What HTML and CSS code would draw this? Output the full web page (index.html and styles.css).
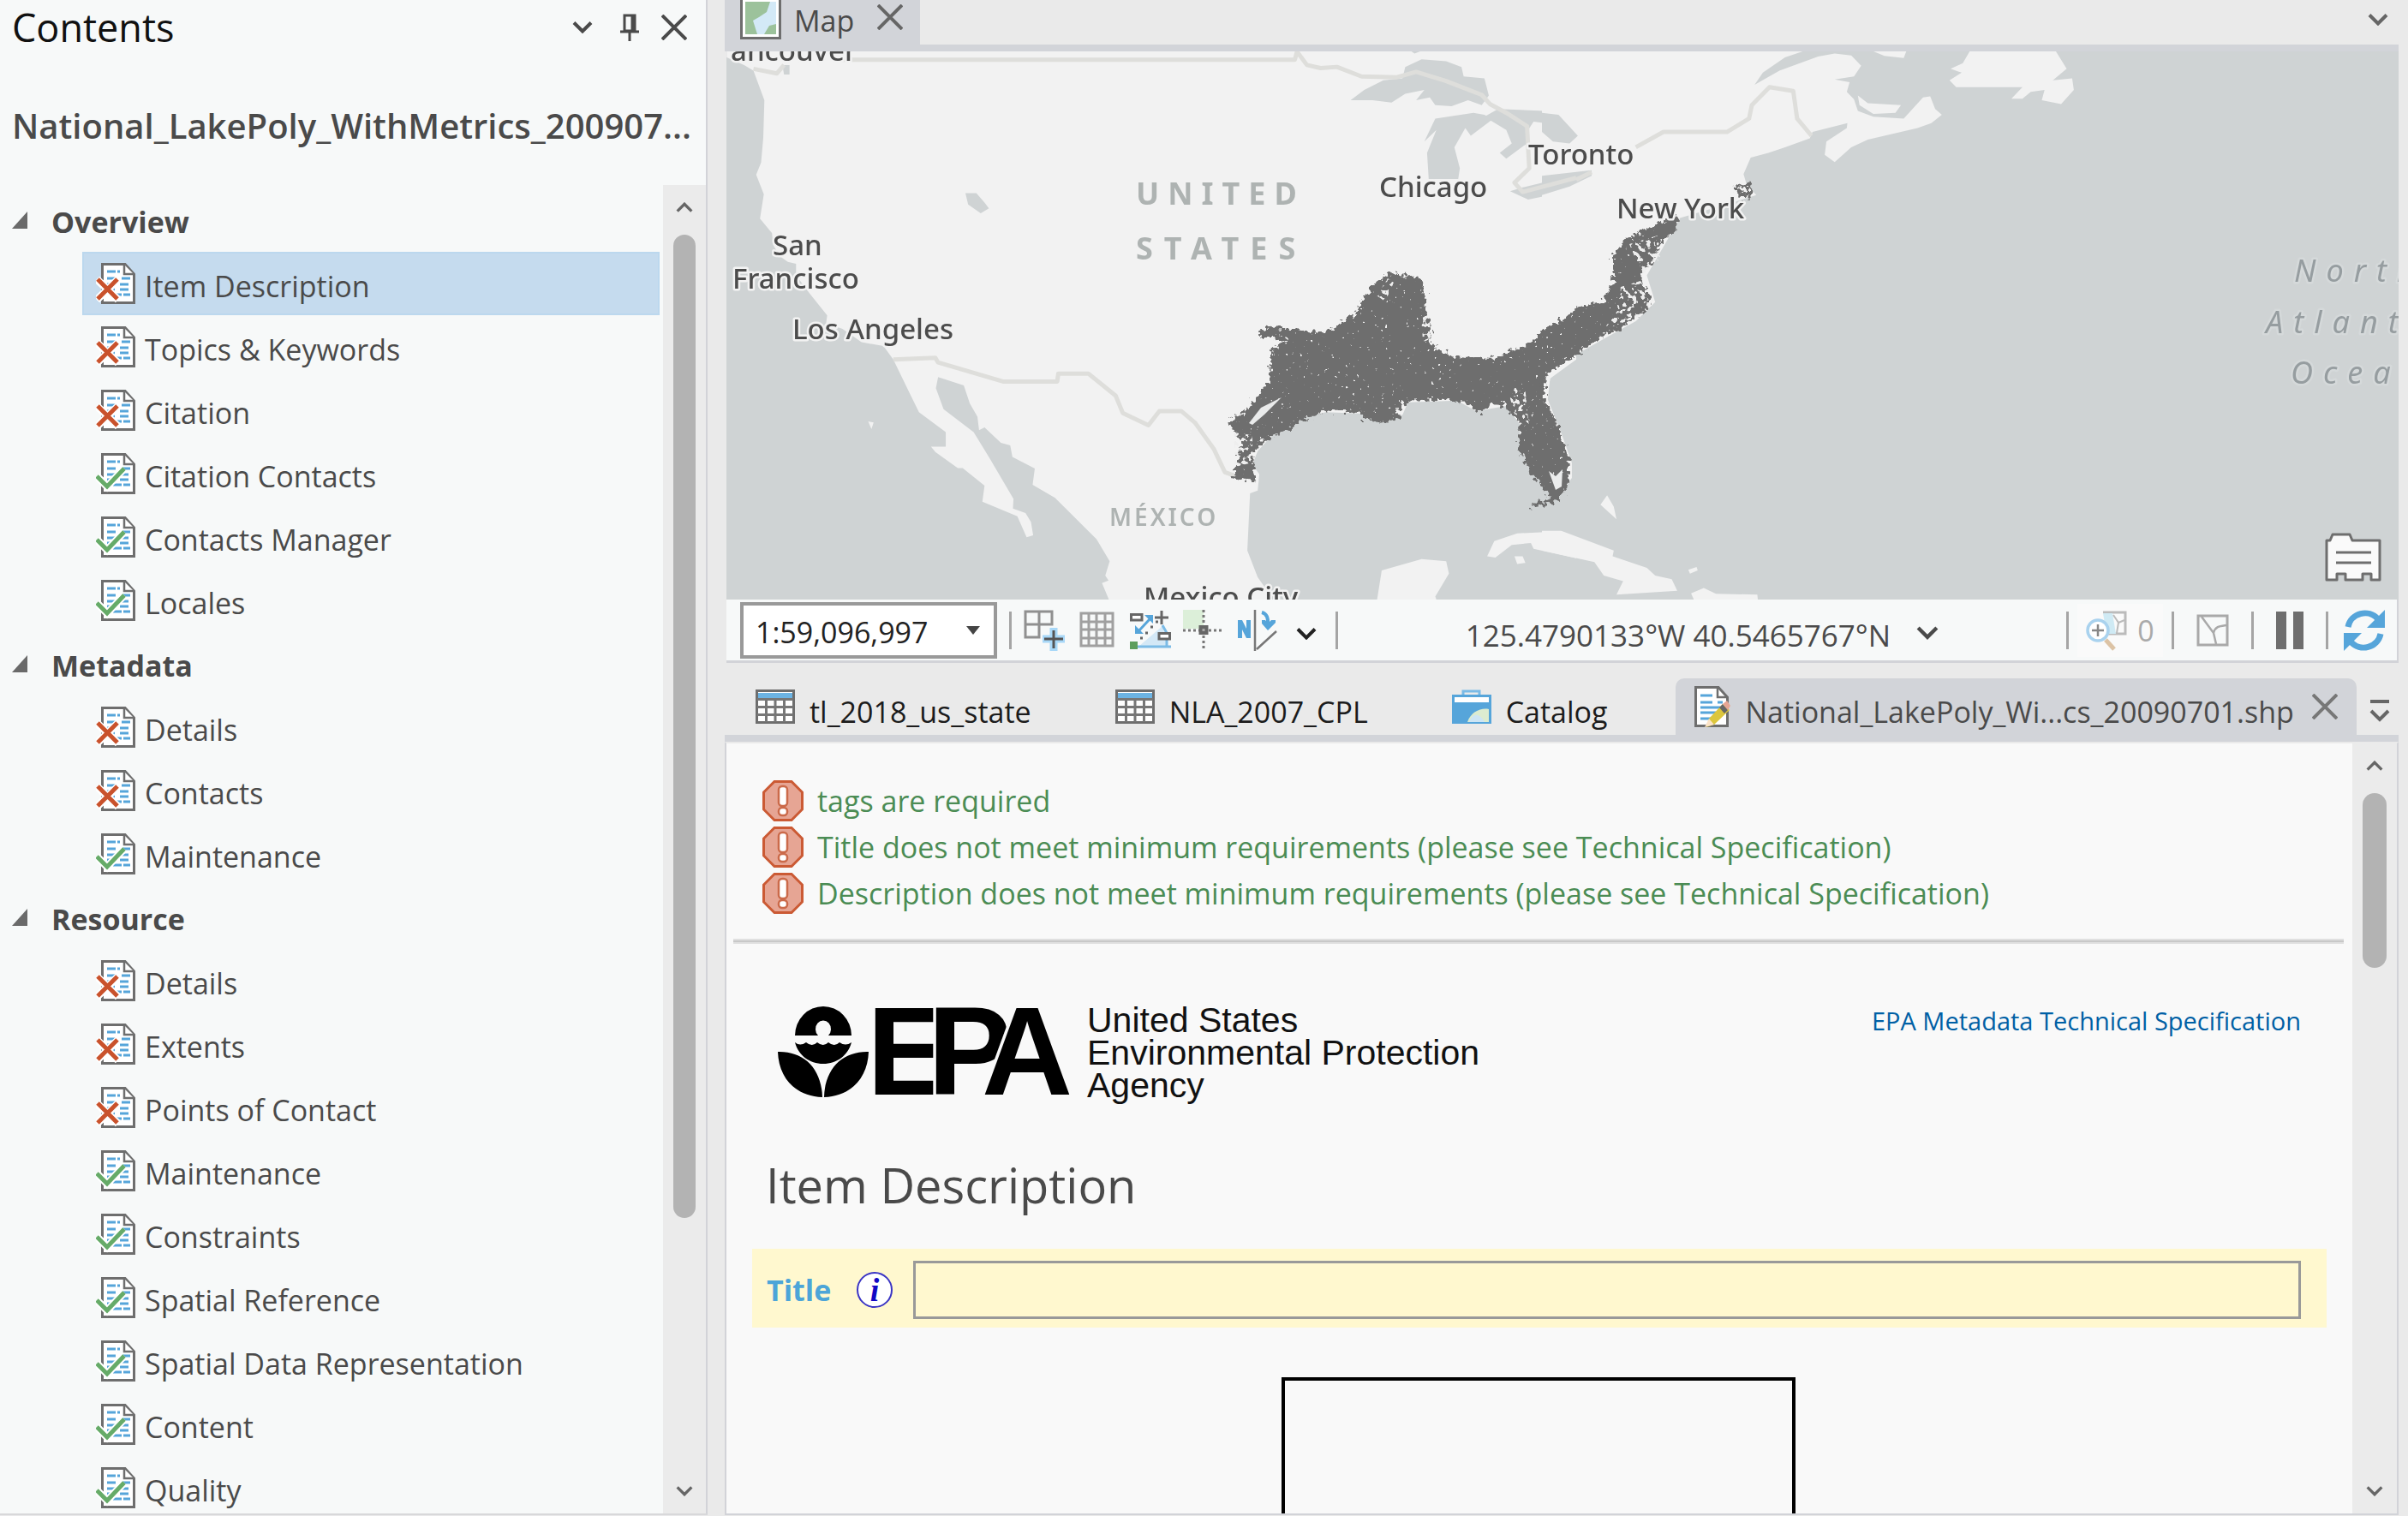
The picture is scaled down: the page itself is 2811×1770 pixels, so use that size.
FILE: index.html
```html
<!DOCTYPE html>
<html lang="en">
<head>
<meta charset="utf-8">
<title>Map - Item Description</title>
<meta name="viewport" content="width=device-width, initial-scale=1">
<link rel="stylesheet" href="styles.css">
</head>
<body>
<svg class="sprite" aria-hidden="true">
  <symbol id="page" viewBox="0 0 46 48">
    <path d="M7.500 1.500H34L44.500 13V46.500H7.500Z" fill="#fff" stroke="#6e6e6e" stroke-width="3"/>
    <path d="M33 2V13H44" fill="#fff" stroke="#6e6e6e" stroke-width="2.500"/>
    <path d="M13 10H28M13 18H24M30 18H40M13 25H22M28 25H40M13 31H22M28 31H40M20 37H40" stroke="#56a5da" stroke-width="3" stroke-dasharray="10 2"/>
  </symbol>
  <symbol id="bad" viewBox="0 0 46 48">
    <use href="#page"/>
    <path d="M1 19L26 43M26 19L1 43" stroke="#fff" stroke-width="9"/>
    <path d="M2 19L25 42M25 19L2 42" stroke="#c9522c" stroke-width="5"/>
  </symbol>
  <symbol id="good" viewBox="0 0 46 48">
    <use href="#page"/>
    <path d="M1 27L13 39L33 18" fill="none" stroke="#fff" stroke-width="9"/>
    <path d="M1 27L13 39L33 18" fill="none" stroke="#66ab68" stroke-width="5"/>
  </symbol>
  <symbol id="x" viewBox="0 0 30 30"><path d="M1 1L29 29M29 1L1 29" stroke="currentColor" stroke-width="4"/></symbol>
  <symbol id="down" viewBox="0 0 24 14"><path d="M2 1.500L12 11.500L22 1.500" fill="none" stroke="currentColor" stroke-width="4"/></symbol>
  <symbol id="up" viewBox="0 0 24 14"><path d="M2 12.500L12 2.500L22 12.500" fill="none" stroke="currentColor" stroke-width="4"/></symbol>
  <symbol id="table" viewBox="0 0 46 40">
    <path d="M1.500 1.500H44.500V38.500H1.500Z" fill="#fff" stroke="#6e6e6e" stroke-width="3"/>
    <path d="M3 4H43V10H3Z" fill="#6cb4e4"/>
    <path d="M2 11.500H44M2 20.500H44M2 29.500H44M12.500 11V38M23 11V38M33.500 11V38" stroke="#777" stroke-width="3"/>
  </symbol>
  <symbol id="alert" viewBox="0 0 48 48">
    <path d="M14 1.500H34L46.500 14V34L34 46.500H14L1.500 34V14Z" fill="#e6a594" stroke="#cb5a34" stroke-width="3"/>
    <rect x="19" y="7" width="10" height="23" rx="4" fill="#fff" stroke="#cb6a4a" stroke-width="2.500"/>
    <rect x="19" y="32" width="10" height="9" rx="4" fill="#fff" stroke="#cb6a4a" stroke-width="2.500"/>
  </symbol>
</svg>

<div class="app">
  <aside class="contents">
    <header class="contents-head">
      <h2>Contents</h2>
      <div class="pane-tools">
        <button type="button" aria-label="Pane options"><svg width="24" height="14"><use href="#down"/></svg></button>
        <button type="button" aria-label="Pin pane"><svg width="28" height="32" viewBox="0 0 28 32"><path d="M11 2H23V20H11ZM6 21H28M17 21V32" fill="none" stroke="currentColor" stroke-width="3"/><path d="M21 2V20" stroke="currentColor" stroke-width="5"/></svg></button>
        <button type="button" aria-label="Close pane"><svg width="30" height="30"><use href="#x"/></svg></button>
      </div>
    </header>
    <h3 class="dataset">National_LakePoly_WithMetrics_200907...</h3>
    <div class="scroll-row">
      <nav class="tree" aria-label="Metadata sections">
        <button type="button" class="group"><svg width="18" height="20" viewBox="0 0 18 20"><path d="M18 0V20H0Z" fill="#6a6a6a"/></svg><span>Overview</span></button>
        <ul>
          <li><a class="active" href="#item"><svg><use href="#bad"/></svg><span>Item Description</span></a></li>
          <li><a href="#topics"><svg><use href="#bad"/></svg><span>Topics &amp; Keywords</span></a></li>
          <li><a href="#citation"><svg><use href="#bad"/></svg><span>Citation</span></a></li>
          <li><a href="#citation-contacts"><svg><use href="#good"/></svg><span>Citation Contacts</span></a></li>
          <li><a href="#manager"><svg><use href="#good"/></svg><span>Contacts Manager</span></a></li>
          <li><a href="#locales"><svg><use href="#good"/></svg><span>Locales</span></a></li>
        </ul>
        <button type="button" class="group"><svg width="18" height="20" viewBox="0 0 18 20"><path d="M18 0V20H0Z" fill="#6a6a6a"/></svg><span>Metadata</span></button>
        <ul>
          <li><a href="#m-details"><svg><use href="#bad"/></svg><span>Details</span></a></li>
          <li><a href="#m-contacts"><svg><use href="#bad"/></svg><span>Contacts</span></a></li>
          <li><a href="#m-maintenance"><svg><use href="#good"/></svg><span>Maintenance</span></a></li>
        </ul>
        <button type="button" class="group"><svg width="18" height="20" viewBox="0 0 18 20"><path d="M18 0V20H0Z" fill="#6a6a6a"/></svg><span>Resource</span></button>
        <ul>
          <li><a href="#r-details"><svg><use href="#bad"/></svg><span>Details</span></a></li>
          <li><a href="#extents"><svg><use href="#bad"/></svg><span>Extents</span></a></li>
          <li><a href="#points"><svg><use href="#bad"/></svg><span>Points of Contact</span></a></li>
          <li><a href="#r-maintenance"><svg><use href="#good"/></svg><span>Maintenance</span></a></li>
          <li><a href="#constraints"><svg><use href="#good"/></svg><span>Constraints</span></a></li>
          <li><a href="#reference"><svg><use href="#good"/></svg><span>Spatial Reference</span></a></li>
          <li><a href="#representation"><svg><use href="#good"/></svg><span>Spatial Data Representation</span></a></li>
          <li><a href="#content"><svg><use href="#good"/></svg><span>Content</span></a></li>
          <li><a href="#quality"><svg><use href="#good"/></svg><span>Quality</span></a></li>
        </ul>
      </nav>
      <div class="scrollbar">
        <button type="button" aria-label="Scroll up"><svg width="20" height="12"><use href="#up"/></svg></button>
        <div class="track"><div class="thumb thumb-tree"></div></div>
        <button type="button" aria-label="Scroll down"><svg width="20" height="12"><use href="#down"/></svg></button>
      </div>
    </div>
  </aside>

  <main class="work">
    <section class="map-pane">
      <div class="map-tabs">
        <div class="map-tab">
          <svg width="48" height="46" viewBox="0 0 48 46"><path d="M1.500 -2H46.500V44.500H1.500Z" fill="#fff" stroke="#6e6e6e" stroke-width="3"/><path d="M6 2H42V40H6Z" fill="#d3e9f7"/><path d="M6 2H35L31 14L22 20L15 24L20 40H6ZM42 40H28L34 30L42 28Z" fill="#9cc29b"/></svg>
          <span>Map</span>
          <button type="button" aria-label="Close map"><svg width="30" height="30"><use href="#x"/></svg></button>
        </div>
        <button type="button" class="more" aria-label="View list"><svg width="24" height="14"><use href="#down"/></svg></button>
      </div>
      <div class="map-view">
        <svg class="map" viewBox="848 60 1952 640" preserveAspectRatio="xMidYMid slice" role="img" aria-label="Basemap of North America with lake polygons">
          <defs>
            <filter id="lakes" x="-5%" y="-5%" width="110%" height="110%">
              <feTurbulence type="fractalNoise" baseFrequency="0.180" numOctaves="2" seed="4" result="n"/>
              <feDisplacementMap in="SourceGraphic" in2="n" scale="14" xChannelSelector="R" yChannelSelector="G" result="edge"/>
              <feTurbulence type="fractalNoise" baseFrequency="0.240" numOctaves="2" seed="9"/>
              <feColorMatrix type="matrix" values="0 0 0 0 0  0 0 0 0 0  0 0 0 0 0  14 0 0 0 -10.200" result="holes"/>
              <feComposite in="edge" in2="holes" operator="out"/>
            </filter>
            <filter id="sparse">
              <feTurbulence type="fractalNoise" baseFrequency="0.180" numOctaves="2" seed="7"/>
              <feColorMatrix type="matrix" values="0 0 0 0 0  0 0 0 0 0  0 0 0 0 0  16 0 0 0 -8.800" result="m"/>
              <feComposite in="SourceGraphic" in2="m" operator="in"/>
            </filter>
          </defs>
          <rect x="0" y="0" width="3600" height="1000" fill="#cfd3d4"/>
          <g transform="translate(840 0) scale(.63776 .44643)" fill="#f2f2f2">
            <path d="M13 100V150L45 170L62 185L82 262L80 360L76 425L67 457L81 508L74 572L96 610L98 640L110 670L125 685L140 690V720L165 768L197 825L195 845L225 860L260 895L300 905L318 940L345 1020L365 1078L414 1130V1168H387L395 1182L436 1224H445L485 1270L481 1312L545 1350L562 1405L574 1400L570 1365L560 1342L537 1330L538 1305L495 1200L465 1130L410 1070L396 1015L400 986L447 1008L458 1055L472 1090L475 1125L485 1118L515 1158L532 1165L536 1195L577 1225L573 1268L614 1302L690 1410L714 1468L706 1505L712 1518L700 1525L722 1600H1010L1000 1540L985 1510L966 1440L971 1290L985 1283L988 1240L975 1215L985 1180L1010 1140L1070 1090L1110 1078L1180 1082L1200 1095L1250 1085L1260 1052L1350 1048L1385 1075L1440 1062L1465 1110V1170L1490 1240L1535 1300L1560 1250V1210L1540 1130L1516 1045L1520 990L1568 940V100Z"/>
            <path d="M1405 1455L1418 1415L1460 1395L1535 1390L1568 1405V1460L1490 1435L1485 1420L1450 1425L1420 1458ZM1200 1600L1212 1492L1285 1462L1330 1468L1335 1500L1310 1560L1320 1600ZM1455 1455H1470L1475 1472L1460 1475ZM272 1102L282 1105L278 1122Z"/>
            <path fill="#cfd3d4" d="M1155 262L1180 235L1215 210L1250 205L1255 175L1285 155L1330 160L1358 175L1362 200L1400 205L1408 250L1395 275L1370 262L1340 278L1310 275L1300 255L1275 262L1290 235L1255 245L1230 268L1195 262ZM1290 370L1310 310L1380 295L1400 300L1415 312L1375 355L1365 335L1345 385L1355 440L1352 468H1298L1295 400L1312 340ZM1425 285L1510 290L1540 300L1568 350V370L1530 365L1515 345L1525 325L1490 318L1480 340L1478 375L1440 415L1428 400L1450 375L1440 340L1400 305ZM1447 500L1470 490L1500 480L1568 455V485L1520 510L1480 522ZM450 505H470L485 530L493 545L478 558L455 535ZM1265 133H1285L1272 140ZM115 170H128V195H118Z"/>
          </g>
          <g transform="translate(1800 0) scale(.64475 .44643)" fill="#f2f2f2">
            <path d="M0 100V133H475L440 150L400 190L385 222L430 185L500 148L530 140L560 145L578 172L565 200L530 208L557 215L552 240L565 260L572 290L600 305L655 310L690 255L703 252L712 285L724 300L705 322L680 335L590 365L560 385L530 424L512 405L515 370L552 335L553 322L490 345L485 362L440 385L410 400L378 412L365 455L370 480L388 510L355 525L250 570L222 640L190 720L205 790L170 840L120 880L40 945L15 990L8 1045L0 1030Z"/>
            <path d="M572 250L590 270L650 275L640 295L600 298L575 275ZM775 133H930L950 180L925 210L960 205L963 235L940 272L905 262L910 235L885 240L870 258H850L870 228H750L738 210L760 190L740 180L762 165ZM598 133H660L655 152L620 146ZM0 1388H35L130 1440L128 1455L190 1485L205 1505L235 1515L245 1545L135 1555L147 1520L112 1505L95 1470L0 1440ZM118 1295L130 1325L135 1358L106 1320ZM265 1490L280 1483L282 1492L268 1500ZM270 1552L293 1538L315 1553L390 1555L393 1600H285Z"/>
            <path fill="#cfd3d4" d="M0 295L30 300L65 355L50 375L20 370L0 345ZM0 460L90 445V460L50 488L0 510Z"/>
          </g>
          <g fill="none" stroke="#dededb" stroke-width="5" stroke-linejoin="round">
            <path vector-effect="non-scaling-stroke" transform="translate(840 0) scale(.63776 .44643)" d="M215 156H1053L1057 135L1075 170L1100 178L1130 175L1175 200L1240 202L1275 188L1330 212L1395 248L1410 272L1440 295L1478 330L1482 440L1455 478L1470 502L1568 465M318 940L395 936L400 948L520 998H618L620 977H675L725 1035L738 1080L785 1112L805 1075H845L870 1105L905 1175L925 1235L945 1245M62 180L105 192L118 170"/>
            <path vector-effect="non-scaling-stroke" transform="translate(1800 0) scale(.64475 .44643)" d="M62 470L90 450M170 385L220 345H335L375 310L380 275L412 228L455 238L462 310L488 355"/>
          </g>
          <g filter="url(#lakes)" fill="#6e6e6e">
            <path transform="translate(837 -1) scale(.63776 .44643)" d="M1230 715L1255 722L1288 728L1298 770L1295 820L1305 850L1308 905L1340 930L1385 942L1430 935L1480 905L1520 875L1568 830V940L1530 960L1516 1000V1050L1545 1135L1560 1210L1556 1280L1540 1308L1520 1295L1490 1240L1468 1175V1110L1440 1062L1420 1060L1395 1082L1370 1055L1330 1048L1262 1052L1245 1075L1250 1100L1215 1108L1190 1102L1175 1082L1120 1078L1080 1095L1040 1130L1000 1155L980 1190L985 1260L945 1250L950 1220L960 1160L935 1105L965 1080L1010 1000L1015 920L1045 890L1020 885H995L990 872L1010 855L1060 865L1115 870L1175 815L1180 785L1200 750Z"/>
            <path transform="translate(1796 -1) scale(.64475 .44643)" d="M0 870L50 835L65 810L118 790L135 740V665L160 625L250 565L252 600L220 640L205 690L185 720L205 800L170 840L120 880L60 935L15 985L8 1050L0 1000Z"/>
            <path d="M1787 590L1805 588L1819 580M2026 218L2041 216L2042 228L2030 227M2027 216L2032 228" fill="none" stroke="#6e6e6e" stroke-width="5"/>
          </g>
          <g filter="url(#sparse)" fill="#eee">
            <path d="M1892 335L1915 328L1930 352L1912 370L1872 385L1887 362ZM1902 285L1935 275L1938 302L1918 322ZM1440 505L1462 508L1462 540L1442 545ZM1620 325L1627 330L1617 352L1607 345ZM1659 368L1669 370L1671 402L1661 398ZM1760 455L1780 450L1785 500L1770 490Z"/>
          </g>
          <path d="M1458 494L1472 476L1496 464L1476 484L1462 496Z" fill="#eaebeb"/>
          <path d="M1808 550L1816 556L1824 548L1823 568L1816 572Z" fill="#eceded"/>
          <g class="place">
            <text x="853" y="71">ancouver</text>
            <text x="902" y="298">San</text>
            <text x="855" y="337">Francisco</text>
            <text x="925" y="396">Los Angeles</text>
            <text x="1610" y="230">Chicago</text>
            <text x="1784" y="192">Toronto</text>
            <text x="1887" y="255">New York</text>
            <text x="1335" y="709">Mexico City</text>
          </g>
          <g class="country">
            <text x="1326" y="239">UNITED</text>
            <text class="states" x="1326" y="303">STATES</text>
            <text class="mexico" x="1295" y="614">MÉXICO</text>
          </g>
          <g class="ocean">
            <text x="2678" y="329">North</text>
            <text x="2645" y="389">Atlantic</text>
            <text x="2674" y="448">Ocean</text>
          </g>
        </svg>
        <button type="button" class="legend" aria-label="Map notebook"><svg width="66" height="58" viewBox="0 0 66 58"><path d="M2 55V9H6L9 2H29L32 9H64V55H54V48H44V55H24V48H14V55Z" fill="#fafafa" stroke="#6e6e6e" stroke-width="3" stroke-linejoin="round"/><path d="M13 23H54M13 35H54" stroke="#6e6e6e" stroke-width="3"/></svg></button>
      </div>
      <div class="toolbar">
        <div class="scale">
          <select aria-label="Map scale"><option>1:59,096,997</option></select>
          <svg width="16" height="10" viewBox="0 0 16 10"><path d="M0 0H16L8 10Z" fill="#444"/></svg>
        </div>
        <i class="sep"></i>
        <button type="button" aria-label="Add grid"><svg width="48" height="48" viewBox="0 0 48 48"><path d="M2 2H33V17H2ZM2 17V32H18V2" fill="none" stroke="#909090" stroke-width="3"/><path d="M35 21V48M22 34H48" stroke="#a8d8f8" stroke-width="9"/><path d="M35 24V45M24 34H46" stroke="#555" stroke-width="3"/></svg></button>
        <button type="button" aria-label="Grid"><svg width="48" height="48" viewBox="0 0 48 48"><path d="M5 4H42V42H5ZM5 14H42M5 23H42M5 33H42M14 4V42M23 4V42M33 4V42" fill="none" stroke="#a0a0a0" stroke-width="3"/></svg></button>
        <button type="button" aria-label="Snapping"><svg width="48" height="48" viewBox="0 0 48 48"><path d="M10 43L38 19L44 44Z" fill="#d3e8f6"/><path d="M8 43H48M38 18L43 27M43 34V43" stroke="#7bbbe6" stroke-width="3"/><path d="M10 25L23 11" stroke="#56a5da" stroke-width="3"/><path d="M17 6H27V16ZM6 18V28H16Z" fill="#56a5da"/><path d="M1.500 5.500H14V12H1.500ZM34 27.500H46.500V34H34Z" fill="#fff" stroke="#666" stroke-width="3"/><path d="M37 1V17M29 9H45M30 14H33M24 20H27M18 27H21M12 33H15" stroke="#666" stroke-width="3"/><path d="M0 37H9V46H0Z" fill="#5c9e5c"/></svg></button>
        <button type="button" aria-label="Dynamic constraints"><svg width="48" height="48" viewBox="0 0 48 48"><path d="M0 0H24V22H0Z" fill="#dcefd9"/><path d="M24 0V48M0 24H48" stroke="#777" stroke-width="3" stroke-dasharray="3 3"/><path d="M20.500 20H27.500V27H20.500Z" fill="#aaa" stroke="#666" stroke-width="4"/></svg></button>
        <button type="button" aria-label="North up"><svg width="48" height="48" viewBox="0 0 48 48"><path d="M2 33V12H7L12 22V12H17V33H12L7 23V33Z" fill="#56a5da"/><path d="M22 0V48M24 46L47 25" stroke="#777" stroke-width="2.500"/><path d="M30 3Q38 5 37 17" fill="none" stroke="#56a5da" stroke-width="4"/><path d="M30 12H34L37 16L41 12H46V15L37 24L30 16Z" fill="#56a5da"/></svg></button>
        <button type="button" class="tool-more" aria-label="More tools"><svg width="24" height="14"><use href="#down"/></svg></button>
        <i class="sep"></i>
        <div class="coords"><span>125.4790133°W 40.5465767°N</span><button type="button" aria-label="Coordinate format"><svg width="26" height="16"><use href="#down"/></svg></button></div>
        <div class="status">
          <i class="sep"></i>
          <button type="button" class="count" aria-label="Selected features"><svg width="48" height="48" viewBox="0 0 48 48"><path d="M20 3H46V28H24" fill="#fafafa" stroke="#bbb" stroke-width="3"/><path d="M20 4H31L35 28H24Z" fill="#cfeaf4"/><path d="M32 6L38 15L36 27M38 15L45 12" fill="none" stroke="#bbb" stroke-width="2"/><circle cx="14" cy="24" r="12" fill="#fff" stroke="#a9d2ee" stroke-width="3.500"/><path d="M14 17V31M7 24H21" stroke="#888" stroke-width="2.500"/><path d="M23 35L33 46" stroke="#dcc3a5" stroke-width="5"/></svg><span>0</span></button>
          <i class="sep"></i>
          <button type="button" class="clip" aria-label="Map extent"><svg width="38" height="38" viewBox="0 0 38 38"><path d="M2 2H36V36H2Z" fill="none" stroke="#a9a9a9" stroke-width="3"/><path d="M6 3L20 22L23 35M20 22C22 14 28 14 35 13" fill="none" stroke="#a9a9a9" stroke-width="2.500"/></svg></button>
          <i class="sep"></i>
          <button type="button" aria-label="Pause drawing"><svg width="48" height="48" viewBox="0 0 48 48"><path d="M8 2H20V46H8ZM28 2H40V46H28Z" fill="#6e6e6e"/></svg></button>
          <i class="sep"></i>
          <button type="button" aria-label="Refresh"><svg width="48" height="48" viewBox="0 0 48 48"><path d="M5 20C8 4 29 -2 40 11M43 28C40 44 19 50 8 37" fill="none" stroke="#56a5da" stroke-width="7"/><path d="M48 0V21H27ZM0 48V27H21Z" fill="#56a5da"/></svg></button>
        </div>
      </div>
    </section>

    <section class="doc-pane">
      <div class="doc-tabs">
        <button type="button" class="tab"><svg width="46" height="40"><use href="#table"/></svg><span>tl_2018_us_state</span></button>
        <button type="button" class="tab"><svg width="46" height="40"><use href="#table"/></svg><span>NLA_2007_CPL</span></button>
        <button type="button" class="tab"><svg width="46" height="40" viewBox="0 0 46 40"><path d="M13 6V2H32V6" fill="none" stroke="#7bbbe6" stroke-width="3"/><path d="M0 6H46V40H0Z" fill="#56a5da"/><path d="M3 9H43V15H3Z" fill="#fff"/><path d="M18 38C22 26 34 21 43 23V38Z" fill="#dcecd0"/><path d="M20 38C24 27 32 27 38 38Z" fill="#cde5f4"/></svg><span>Catalog</span></button>
        <div class="tab tab-open"><svg width="42" height="48" viewBox="0 0 42 48"><path d="M1.500 1.500H28L38.500 13V46.500H1.500Z" fill="#fff" stroke="#6e6e6e" stroke-width="3"/><path d="M27 2V13H38" fill="none" stroke="#6e6e6e" stroke-width="2.500"/><path d="M7 11H21M7 19H21M27 19H33M7 25H30M7 31H25M7 38H20" stroke="#56a5da" stroke-width="3"/><path d="M17 38L33 21L41 28L23 45L14 48Z" fill="#dcc63c"/><path d="M17 38L23 45L12 48Z" fill="#fbe3c8"/><path d="M29 25L33 21L39 28L35 32Z" fill="#666"/><path d="M33 21L38 17L42 23L39 28Z" fill="#e6a594"/></svg><span>National_LakePoly_Wi...cs_20090701.shp</span><button type="button" aria-label="Close tab"><svg width="30" height="30"><use href="#x"/></svg></button></div>
        <button type="button" class="more-docs" aria-label="Open views"><svg width="24" height="28" viewBox="0 0 24 28"><path d="M1 3H23M2 14L12 24L22 14" fill="none" stroke="currentColor" stroke-width="4"/></svg></button>
      </div>
      <div class="scroll-row doc">
        <div class="page">
          <ul class="alerts">
            <li><svg width="48" height="48"><use href="#alert"/></svg><span>tags are required</span></li>
            <li><svg width="48" height="48"><use href="#alert"/></svg><span>Title does not meet minimum requirements (please see Technical Specification)</span></li>
            <li><svg width="48" height="48"><use href="#alert"/></svg><span>Description does not meet minimum requirements (please see Technical Specification)</span></li>
          </ul>
          <hr>
          <div class="brand">
            <svg width="820" height="124" viewBox="908 1174 820 124" role="img" aria-label="EPA United States Environmental Protection Agency">
              <path d="M928 1211A33 34 0 0 1 994 1211H967A9 10 0 1 0 955 1211Z"/>
              <path d="M928 1219Q934 1224 941 1219Q948 1225 954 1219Q961 1225 967 1219Q974 1225 980 1219Q987 1224 994 1219C990 1234 977 1244 961 1244C945 1244 932 1234 928 1219Z"/>
              <path d="M908 1230C937 1229 959 1248 960 1283C929 1282 909 1261 908 1230ZM1014 1230C985 1229 963 1248 962 1283C993 1282 1013 1261 1014 1230Z"/>
              <text class="epa" y="1280"><tspan x="1012">E</tspan><tspan x="1083">P</tspan><tspan x="1146">A</tspan></text>
              <g class="agency"><text x="1269" y="1207">United States</text><text x="1269" y="1245">Environmental Protection</text><text x="1269" y="1283">Agency</text></g>
            </svg>
            <a href="#spec">EPA Metadata Technical Specification</a>
          </div>
          <h1>Item Description</h1>
          <div class="field">
            <label for="title">Title</label>
            <svg width="44" height="44" viewBox="0 0 44 44" role="img" aria-label="Information"><circle cx="22" cy="22" r="20" fill="#fff" stroke="#3b35c4" stroke-width="2"/><text class="info" x="22" y="35" text-anchor="middle">i</text></svg>
            <input id="title" type="text">
          </div>
          <div class="thumbnail"></div>
        </div>
        <div class="scrollbar">
          <button type="button" aria-label="Scroll up"><svg width="20" height="12"><use href="#up"/></svg></button>
          <div class="track"><div class="thumb thumb-doc"></div></div>
          <button type="button" aria-label="Scroll down"><svg width="20" height="12"><use href="#down"/></svg></button>
        </div>
      </div>
    </section>
  </main>
</div>
</body>
</html>
```
FILE: styles.css
```css
* { box-sizing: border-box; }

body {
  margin: 0;
  background: #eaeaea;
  color: #4a4a4a;
  font: 34px/48px "Open Sans", "Noto Sans", sans-serif;
}

button {
  padding: 0;
  border: 0;
  background: none;
  color: inherit;
  font: inherit;
  display: flex;
  align-items: center;
  justify-content: center;
  flex: none;
}

svg { display: block; flex: none; }
ul { list-style: none; margin: 0; padding: 0; }
h1, h2, h3 { margin: 0; font-weight: 400; }
.sprite { position: absolute; width: 0; height: 0; }

.app { display: flex; gap: 20px; height: 100vh; padding: 0 11px 1px 0; overflow: hidden; }

/* Contents pane */
.contents {
  flex: 0 0 826px;
  display: flex;
  flex-direction: column;
  background: #f7f9f9;
  border-right: 2px solid #d2d3d8;
  border-bottom: 2px solid #d8d8da;
}
.contents-head { display: flex; align-items: center; justify-content: space-between; height: 64px; padding: 0 22px 0 14px; }
.contents-head h2 { font-size: 45px; line-height: 64px; color: #111; }
.pane-tools { display: flex; align-items: center; gap: 26px; }
.dataset { margin: 48px 14px 34px; font-size: 40px; line-height: 70px; font-weight: 600; white-space: nowrap; }

.scroll-row { display: flex; flex: 1; min-height: 0; }
.tree { flex: 1; padding: 4px 4px 0 0; overflow: hidden; }
.group { width: 100%; height: 74px; padding-left: 14px; gap: 28px; justify-content: flex-start; font-weight: 700; }
.group span { padding-top: 4px; }
.tree ul { padding-left: 96px; }
.tree a { display: flex; align-items: center; gap: 11px; height: 74px; padding-left: 16px; color: inherit; text-decoration: none; }
.tree a svg { width: 46px; height: 48px; }
.tree a span { padding-top: 5px; }
.tree a.active { background: #c5dbee; border: 2px solid #bcd8ee; padding-left: 14px; }

.scrollbar { flex: 0 0 50px; display: flex; flex-direction: column; background: #ebebeb; color: #666; }
.scrollbar button { height: 52px; }
.scrollbar .track { flex: 1; padding: 6px 12px; }
.thumb { border-radius: 14px; background: #b3b3b3; }
.thumb-tree { height: 80%; }
.thumb-doc { height: 26%; }

/* Map pane */
.work { flex: 1; min-width: 0; display: flex; flex-direction: column; }
.map-pane { flex: 774; min-height: 0; display: flex; flex-direction: column; }
.map-tabs { display: flex; justify-content: space-between; height: 60px; border-bottom: 8px solid #d2d4d9; }
.map-tab { display: flex; gap: 15px; padding: 0 20px 0 18px; background: #d2d4d9; }
.map-tab span { margin-right: 12px; }
.map-tab button { height: 40px; color: #666; }
.more { height: 46px; margin-right: 12px; color: #666; }
.map-view { position: relative; flex: 1; min-height: 0; margin-left: 2px; }
.map { width: 100%; height: 100%; }
.legend { position: absolute; right: 20px; bottom: 20px; }

.map text { font-family: "Noto Sans", "Open Sans", sans-serif; paint-order: stroke; stroke: #f2f2f2; stroke-width: 5px; stroke-linejoin: round; }
.place { font-size: 33px; font-weight: 500; fill: #4c4c4c; }
.map .ocean text { stroke: #d5d9da; }
.country { font-size: 36px; font-weight: 700; fill: #aeb3b2; letter-spacing: 10px; }
.country .states { letter-spacing: 13px; }
.country .mexico { font-size: 28px; font-weight: 600; letter-spacing: 3px; }
.ocean { font-size: 36px; font-style: italic; fill: #969da0; letter-spacing: 12px; }

.toolbar {
  display: flex;
  align-items: center;
  gap: 14px;
  height: 74px;
  margin-left: 2px;
  padding: 0 14px 0 16px;
  background: #f7f9f9;
  border: 2px solid #d2d3d8;
  border-width: 0 2px 3px 0;
}
.scale { display: flex; align-items: center; width: 300px; height: 66px; padding-right: 16px; border: 4px solid #999; background: #fff; }
.scale select { flex: 1; height: 58px; padding: 5px 0 0 14px; border: 0; background: none; color: #222; font: inherit; appearance: none; }
.sep { flex: none; width: 3px; height: 44px; background: #a5a5a5; }
.tool-more { width: 40px; padding-top: 8px; color: #222; }
.coords { display: flex; align-items: center; gap: 30px; margin: 0 auto; padding-top: 12px; font-size: 35px; white-space: nowrap; }
.coords button { padding-bottom: 6px; }
.status { display: flex; align-items: center; gap: 18px; }
.count { width: 100px; height: 62px; gap: 12px; margin: 0 -8px; background: #fafafa; color: #aaa; }
.clip { width: 54px; }

/* Document pane */
.doc-pane { flex: 995; min-height: 0; display: flex; flex-direction: column; }
.doc-tabs { display: flex; align-items: flex-end; height: 92px; padding-left: 18px; border-bottom: 8px solid #d2d4d9; }
.tab { display: flex; align-items: center; gap: 17px; height: 66px; padding: 0 80px 0 18px; color: #1c1c1c; white-space: nowrap; }
.tab span { padding-top: 12px; }
.tab-open { margin-left: auto; padding: 0 22px; border-radius: 10px 10px 0 0; background: #d2d4d9; color: #4a4a4a; }
.tab-open button { margin-left: 4px; color: #777; }
.more-docs { width: 54px; height: 56px; color: #666; }

.doc { border: 2px solid #d2d3d8; border-top-color: #eaeaea; background: #f9f9f9; }
.doc .scrollbar { flex-basis: 52px; }
.page { flex: 1; min-width: 0; display: flex; flex-direction: column; overflow: hidden; padding: 40px 10px 0 8px; }
.alerts { padding-left: 34px; color: #4b8c54; }
.alerts li { display: flex; align-items: center; gap: 16px; height: 54px; white-space: nowrap; }
hr { width: 100%; height: 6px; margin: 26px 0 70px; border: 2px solid #e0e0e0; border-width: 2px 0; background: #c8c8c8; flex: none; }
.brand { display: flex; justify-content: space-between; align-items: flex-start; padding: 0 50px 0 52px; }
.brand a { color: #0060a5; font-size: 29px; line-height: 40px; text-decoration: none; }
.epa { font: 700 147px "Liberation Sans", Arial, sans-serif; paint-order: stroke; stroke: #f9f9f9; stroke-width: 7px; }
.agency { font: 41px "Liberation Sans", Arial, sans-serif; fill: #111; }
h1 { padding: 47px 38px 35px; font-size: 56px; line-height: 80px; }
.field { display: flex; align-items: center; flex: none; height: 92px; margin: 0 20px 0 22px; padding: 4px 30px 0 17px; background: #fff8cf; }
.field label { width: 104px; font-weight: 700; color: #4ca5d8; }
.field input { flex: 1; min-width: 0; height: 68px; margin-left: 23px; padding: 0 12px; border: 3px solid #999; background: #fff8cf; font: inherit; }
.info { font: italic 700 38px "Liberation Serif", serif; fill: #1208c4; }
.thumbnail { flex: 1; width: 600px; margin: 58px auto 0; border: 4px solid #000; border-bottom: 0; }
```
